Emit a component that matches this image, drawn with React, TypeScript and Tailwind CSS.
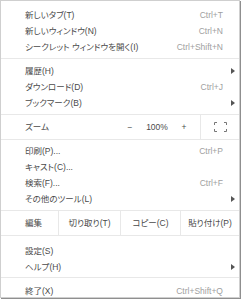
import React from 'react';

type Item = { label: string; shortcut?: string; sub?: boolean };

const Arrow = () => (
  <svg width="4" height="6" viewBox="0 0 4 6" className="fill-[#555]">
    <path d="M0 0 L4 3 L0 6 Z" />
  </svg>
);

const Row: React.FC<{ item: Item }> = ({ item }) => (
  <div className="flex h-[16px] items-center pl-[24px] pr-[4px]">
    <span className="flex-1 text-[#4a4a4a]">{item.label}</span>
    {item.shortcut && <span className="mr-[12px] text-[#a0a0a0]">{item.shortcut}</span>}
    {item.sub && <Arrow />}
  </div>
);

const Sep: React.FC<{ className?: string }> = ({ className = '' }) => (
  <div className={`h-px bg-[#e8e8e8] ${className}`} />
);

const App: React.FC = () => {
  const first: Item[] = [
    { label: '新しいタブ(T)', shortcut: 'Ctrl+T' },
    { label: '新しいウィンドウ(N)', shortcut: 'Ctrl+N' },
    { label: 'シークレット ウィンドウを開く(I)', shortcut: 'Ctrl+Shift+N' },
  ];
  const second: Item[] = [
    { label: '履歴(H)', sub: true },
    { label: 'ダウンロード(D)', shortcut: 'Ctrl+J' },
    { label: 'ブックマーク(B)', sub: true },
  ];
  const third: Item[] = [
    { label: '印刷(P)...', shortcut: 'Ctrl+P' },
    { label: 'キャスト(C)...' },
    { label: '検索(F)...', shortcut: 'Ctrl+F' },
    { label: 'その他のツール(L)', sub: true },
  ];
  const fourth: Item[] = [
    { label: '設定(S)' },
    { label: 'ヘルプ(H)', sub: true },
  ];

  return (
    <div className="h-[300px] w-[242px] bg-white">
      <div
        className="h-[298px] w-[240px] overflow-hidden border border-[#cfcfcf] bg-white pt-[6px] text-[8.5px] leading-none shadow-[1px_1px_0_#8f8f8f] [font-family:'Liberation_Sans','Noto_Sans_CJK_JP',sans-serif] [font-feature-settings:'palt']"
      >
        {first.map((it) => <Row key={it.label} item={it} />)}
        <Sep className="mb-[4px] mt-[3px]" />
        {second.map((it) => <Row key={it.label} item={it} />)}
        <Sep className="mt-[3px]" />
        <div className="flex h-[24px] items-center">
          <span className="flex-1 pl-[24px] text-[#4a4a4a]">ズーム</span>
          <span className="w-[16px] text-center text-[#4a4a4a]">−</span>
          <span className="w-[38px] text-center text-[#4a4a4a]">100%</span>
          <span className="w-[16px] text-center text-[#4a4a4a]">+</span>
          <div className="ml-[8px] flex h-full w-[39px] items-center justify-center border-l border-[#e8e8e8]">
            <svg width="13" height="10" viewBox="0 0 13 10" fill="none" stroke="#777" strokeWidth="1">
              <path d="M0.5 3V0.5H3M10 0.5H12.5V3M12.5 7V9.5H10M3 9.5H0.5V7" />
            </svg>
          </div>
        </div>
        <Sep className="mb-[3px]" />
        {third.map((it) => <Row key={it.label} item={it} />)}
        <Sep className="mt-[3px]" />
        <div className="flex h-[24px] items-center text-[#4a4a4a]">
          <span className="w-[57px] pl-[24px]">編集</span>
          <div className="flex h-full w-[62px] items-center justify-center border-l border-[#e8e8e8]">切り取り(T)</div>
          <div className="flex h-full w-[60px] items-center justify-center border-l border-[#e8e8e8]">コピー(C)</div>
          <div className="flex h-full flex-1 items-center justify-center border-l border-[#e8e8e8]">貼り付け(P)</div>
        </div>
        <Sep className="mb-[7px]" />
        {fourth.map((it) => <Row key={it.label} item={it} />)}
        <Sep className="mb-[5px] mt-[2px]" />
        <Row item={{ label: '終了(X)', shortcut: 'Ctrl+Shift+Q' }} />
      </div>
    </div>
  );
};

export default App;
